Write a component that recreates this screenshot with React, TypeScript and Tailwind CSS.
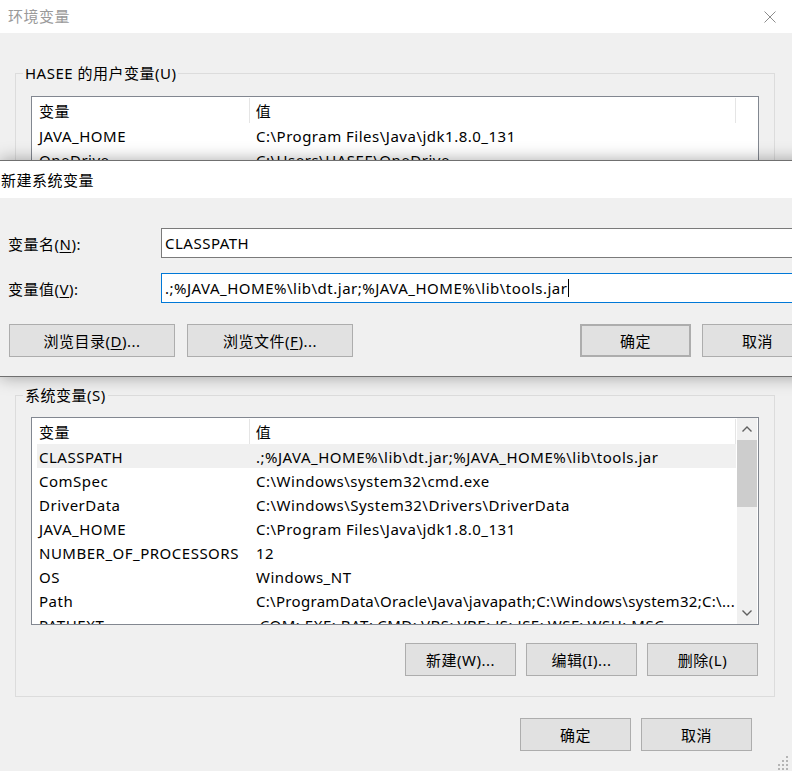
import React from "react"

type Row = { name: string; value: string; tight?: boolean }

const userVars: Row[] = [
  { name: "JAVA_HOME", value: "C:\\Program Files\\Java\\jdk1.8.0_131" },
  { name: "OneDrive", value: "C:\\Users\\HASEE\\OneDrive" },
  { name: "Path", value: "C:\\Users\\HASEE\\AppData\\Local\\Microsoft\\WindowsApps;" },
  { name: "TEMP", value: "C:\\Users\\HASEE\\AppData\\Local\\Temp" },
  { name: "TMP", value: "C:\\Users\\HASEE\\AppData\\Local\\Temp" },
]

const systemVars: Row[] = [
  { name: "CLASSPATH", value: ".;%JAVA_HOME%\\lib\\dt.jar;%JAVA_HOME%\\lib\\tools.jar" },
  { name: "ComSpec", value: "C:\\Windows\\system32\\cmd.exe" },
  { name: "DriverData", value: "C:\\Windows\\System32\\Drivers\\DriverData" },
  { name: "JAVA_HOME", value: "C:\\Program Files\\Java\\jdk1.8.0_131" },
  { name: "NUMBER_OF_PROCESSORS", value: "12" },
  { name: "OS", value: "Windows_NT" },
  {
    name: "Path",
    value: "C:\\ProgramData\\Oracle\\Java\\javapath;C:\\Windows\\system32;C:\\...",
    tight: true,
  },
  { name: "PATHEXT", value: ".COM;.EXE;.BAT;.CMD;.VBS;.VBE;.JS;.JSE;.WSF;.WSH;.MSC" },
]

function Btn({
  children,
  className = "",
}: {
  children: React.ReactNode
  className?: string
}) {
  return (
    <div
      className={`flex h-[33px] shrink-0 items-center justify-center border border-[#adadad] bg-[#e1e1e1] pt-[1px] text-[15px] text-black ${className}`}
    >
      {children}
    </div>
  )
}

function Chevron({ up }: { up?: boolean }) {
  return (
    <svg width="10" height="6" viewBox="0 0 10 6" fill="none">
      <polyline
        points={up ? "0.5,5.5 5,1 9.5,5.5" : "0.5,0.5 5,5 9.5,0.5"}
        stroke="#606060"
        strokeWidth="1.4"
      />
    </svg>
  )
}

function VarList({
  rows,
  selected,
  scrollbar,
  className = "",
}: {
  rows: Row[]
  selected?: number
  scrollbar?: boolean
  className?: string
}) {
  return (
    <div className={`mx-[15px] flex overflow-hidden border border-[#828790] bg-white ${className}`}>
      <div className="w-[704px] shrink-0">
        {/* column header */}
        <div className="flex h-[26px] items-center">
          <div className="flex h-[25px] w-[218px] items-center border-r border-[#e5e5e5] pt-[3px] pl-[7px]">变量</div>
          <div className="flex h-[25px] w-[487px] items-center border-r border-[#e5e5e5] pt-[3px] pl-[6px]">值</div>
        </div>
        {rows.map((row, i) => (
          <div
            key={row.name + i}
            className={`ml-[5px] flex h-[24px] w-[699px] items-center pt-[3px] ${i === selected ? "bg-[#f0f0f0]" : ""}`}
          >
            <div className="w-[219px] shrink-0 pl-[2px] whitespace-nowrap">{row.name}</div>
            <div
              className={`min-w-0 flex-1 overflow-hidden whitespace-nowrap ${row.tight ? "tracking-[0.3px]" : ""}`}
            >
              {row.value}
            </div>
          </div>
        ))}
      </div>
      {scrollbar && (
        <div className="ml-[1px] flex w-[20px] flex-col bg-[#f0f0f0]">
          <div className="flex h-[22px] items-center justify-center">
            <Chevron up />
          </div>
          <div className="h-[67px] bg-[#cdcdcd]" />
          <div className="flex-1" />
          <div className="flex h-[22px] items-center justify-center">
            <Chevron />
          </div>
        </div>
      )}
    </div>
  )
}

export default function App() {
  return (
    <div className="relative h-[771px] w-[792px] overflow-hidden bg-[#f0f0f0] font-['Noto_Sans','Noto_Sans_CJK_SC',sans-serif] text-[15px] tracking-[0.5px] text-black">
      {/* background window: 环境变量 */}
      <div className="flex h-[33px] items-center justify-between bg-white pr-[16px] pl-[8px]">
        <span className="text-[#9a9a9a]">环境变量</span>
        <svg width="12" height="12" viewBox="0 0 12 12">
          <path d="M0.5 0.5 L11.5 11.5 M11.5 0.5 L0.5 11.5" stroke="#8c8c8c" strokeWidth="1" />
        </svg>
      </div>

      <div className="pr-[17px] pl-[15px]">
        <fieldset className="mt-[30px] h-[302px] border border-[#dcdcdc]">
          <legend className="ml-[7px] px-[2px] leading-[20px]">HASEE 的用户变量(U)</legend>
          <VarList rows={userVars} className="mt-[13px] h-[250px]" />
        </fieldset>

        <fieldset className="mt-[20px] h-[312px] border border-[#dcdcdc]">
          <legend className="ml-[7px] px-[2px] leading-[20px]">系统变量(S)</legend>
          <VarList rows={systemVars} selected={0} scrollbar className="mt-[12px] h-[208px]" />
          <div className="mt-[18px] mr-[16px] flex justify-end gap-[10px]">
            <Btn className="w-[111px]">新建(W)...</Btn>
            <Btn className="w-[111px]">编辑(I)...</Btn>
            <Btn className="w-[111px]">删除(L)</Btn>
          </div>
        </fieldset>
      </div>

      <div className="mt-[21px] mr-[40px] flex justify-end gap-[10px]">
        <Btn className="w-[111px]">确定</Btn>
        <Btn className="w-[111px]">取消</Btn>
      </div>

      {/* size grip */}
      <svg className="absolute right-[2px] bottom-[1px]" width="14" height="14" viewBox="0 0 14 14">
        {[
          [10, 0],
          [10, 4],
          [6, 4],
          [10, 8],
          [6, 8],
          [2, 8],
          [10, 12],
          [6, 12],
          [2, 12],
        ].map(([x, y]) => (
          <rect key={`${x}-${y}`} x={x} y={y} width="2" height="2" fill="#b5b5b5" />
        ))}
      </svg>

      {/* foreground dialog: 新建系统变量 */}
      <div className="absolute top-[160px] left-0 w-[830px] border-y border-[#707070] shadow-[0_0_16px_rgba(0,0,0,0.35)]">
        <div className="flex h-[37px] items-center bg-white pt-[1px] pl-[1px]">新建系统变量</div>
        <div className="h-[178px] bg-[#f0f0f0] pt-[30px]">
          <div className="flex items-center">
            <div className="w-[161px] shrink-0 pt-[2px] pl-[8px]">
              变量名(<span className="underline underline-offset-2">N</span>):
            </div>
            <div className="flex h-[30px] w-[660px] items-center border border-[#7a7a7a] bg-white pl-[3px]">
              CLASSPATH
            </div>
          </div>
          <div className="mt-[15px] flex items-center">
            <div className="w-[161px] shrink-0 pt-[2px] pl-[8px]">
              变量值(<span className="underline underline-offset-2">V</span>):
            </div>
            <div className="flex h-[30px] w-[660px] items-center border border-[#0078d7] bg-white pl-[3px] whitespace-nowrap">
              .;%JAVA_HOME%\lib\dt.jar;%JAVA_HOME%\lib\tools.jar
              <span className="ml-[1px] h-[18px] w-px bg-black" />
            </div>
          </div>
          <div className="mt-[21px] flex pl-[9px]">
            <Btn className="w-[166px]">
              浏览目录(<span className="underline underline-offset-2">D</span>)...
            </Btn>
            <Btn className="ml-[12px] w-[166px]">
              浏览文件(<span className="underline underline-offset-2">F</span>)...
            </Btn>
            <Btn className="ml-[227px] w-[111px] border-2 border-[#0078d7]">确定</Btn>
            <Btn className="ml-[11px] w-[111px]">取消</Btn>
          </div>
        </div>
      </div>
    </div>
  )
}
